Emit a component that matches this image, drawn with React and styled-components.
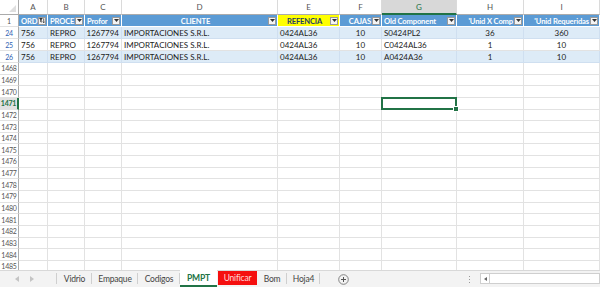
import React from 'react';
import styled, { createGlobalStyle, css } from 'styled-components';

const COLS = '19px 29px 37px 37px 156px 62px 42px 75px 67px 76px';
const GREEN = '#217346';

const Global = createGlobalStyle`
  html, body { margin: 0; padding: 0; background: #fff; overflow: hidden; }
  body { font-family: Lato, "Open Sans", sans-serif; }
`;

const Page = styled.div`
  width: 600px;
  height: 287px;
  display: flex;
  flex-direction: column;
  overflow: hidden;
`;

const Sheet = styled.div`
  height: 270px;
  overflow: hidden;
`;

const Row = styled.div`
  display: grid;
  grid-template-columns: ${COLS};
  height: ${(p) => p.$h}px;
`;

const Corner = styled.div`
  position: relative;
  border-right: 1px solid #ababab;
  border-bottom: 1px solid #ababab;
  &::after {
    content: '';
    position: absolute;
    right: 2px;
    bottom: 2px;
    border-left: 7px solid transparent;
    border-bottom: 7px solid #dfdfdf;
  }
`;

const ColHead = styled.div`
  display: flex;
  align-items: center;
  justify-content: center;
  font-size: 8px;
  color: #555;
  border-right: 1px solid #dadada;
  border-bottom: 1px solid #ababab;
  ${(p) =>
    p.$active &&
    css`
      background: #d8d8d8;
      color: ${GREEN};
      border-bottom: 2px solid ${GREEN};
    `}
`;

const RowHead = styled.div`
  display: flex;
  align-items: center;
  justify-content: center;
  font-size: 7px;
  letter-spacing: -0.2px;
  color: ${(p) => (p.$filtered ? '#2f5fb3' : '#555')};
  border-right: 1px solid #ababab;
  border-bottom: 1px solid #e2e2e2;
  ${(p) =>
    p.$active &&
    css`
      background: #e1e1e1;
      color: ${GREEN};
      font-weight: 700;
      border-right: 2px solid ${GREEN};
    `}
`;

const Cell = styled.div`
  position: relative;
  display: flex;
  align-items: center;
  justify-content: ${(p) => p.$align || 'flex-start'};
  padding: 0 2px;
  font-size: 8px;
  color: #222;
  white-space: nowrap;
  overflow: ${(p) => (p.$selected ? 'visible' : 'hidden')};
  background: ${(p) => (p.$band ? '#ddebf7' : '#fff')};
  border-right: 1px solid ${(p) => (p.$band ? '#cfdff0' : '#e2e2e2')};
  border-bottom: 1px solid ${(p) => (p.$band ? '#cfdff0' : '#e2e2e2')};
  ${(p) =>
    p.$selected &&
    css`
      &::after {
        content: '';
        position: absolute;
        left: -1px;
        top: -1px;
        right: -1px;
        bottom: -1px;
        border: 2px solid ${GREEN};
        z-index: 2;
      }
      &::before {
        content: '';
        position: absolute;
        right: -3px;
        bottom: -3px;
        width: 4px;
        height: 4px;
        background: ${GREEN};
        border: 1px solid #fff;
        z-index: 3;
      }
    `}
`;

const HeadCell = styled.div`
  display: flex;
  align-items: center;
  gap: 1px;
  padding: 0 1px 0 2px;
  overflow: hidden;
  background: ${(p) => (p.$yellow ? '#ffff00' : '#5b9bd5')};
  border-right: 1px solid #fff;
  border-bottom: 1px solid #fff;
`;

const HeadText = styled.span`
  flex: 1;
  min-width: 0;
  white-space: nowrap;
  font-size: 7.6px;
  letter-spacing: -0.15px;
  font-weight: 700;
  text-align: ${(p) => p.$align || 'left'};
  color: ${(p) => (p.$yellow ? '#1f3c66' : '#fff')};
`;

const FilterBtn = styled.span`
  flex: none;
  width: 8px;
  height: 8px;
  display: flex;
  align-items: center;
  justify-content: center;
  background: #f4f4f4;
  border: 1px solid #9a9a9a;
  box-sizing: border-box;
`;

const Arrow = () => (
  <svg width="5" height="3" viewBox="0 0 5 3">
    <path d="M0 0h5L2.5 3z" fill="#333" />
  </svg>
);

const FunnelIcon = () => (
  <svg width="7" height="7" viewBox="0 0 7 7">
    <path d="M0 0.5h4.5L3 2.5v3.5L1.5 5V2.5z" fill="#333" />
    <path d="M5.5 1v5M4.3 4.8l1.2 1.4 1.2-1.4" stroke="#333" strokeWidth="0.9" fill="none" />
  </svg>
);

const TabBar = styled.div`
  height: 17px;
  display: flex;
  align-items: stretch;
  background: #f3f3f3;
  border-top: 1px solid #d8d8d8;
  box-sizing: border-box;
`;

const Nav = styled.div`
  width: 57px;
  display: flex;
  align-items: center;
  gap: 11px;
  padding-left: 15px;
  box-sizing: border-box;
  border-right: 1px solid #cfcfcf;
  margin: 2px 0 3px;
`;

const Tab = styled.div`
  width: ${(p) => p.$w}px;
  flex: none;
  display: flex;
  align-items: center;
  justify-content: center;
  box-sizing: border-box;
  font-size: 8.5px;
  letter-spacing: -0.2px;
  color: #444;
  position: relative;
  ${(p) =>
    !p.$active &&
    !p.$red &&
    css`
      &::after {
        content: '';
        position: absolute;
        right: 0;
        top: 2px;
        bottom: 3px;
        border-right: 1px solid #cfcfcf;
      }
    `}
  ${(p) =>
    p.$active &&
    css`
      background: #fff;
      color: ${GREEN};
      font-weight: 700;
      border-bottom: 2px solid ${GREEN};
      margin-top: -1px;
    `}
  ${(p) =>
    p.$red &&
    css`
      background: #f50f0f;
      color: #ffd9d9;
      margin: 0 0 2px 1px;
    `}
`;

const AddBtn = styled.div`
  display: flex;
  align-items: center;
  margin-left: 18px;
`;

const Splitter = styled.div`
  margin-left: auto;
  width: 3px;
  display: flex;
  flex-direction: column;
  justify-content: center;
  gap: 2px;
  margin-right: 8px;
  span {
    width: 1px;
    height: 1px;
    background: #999;
  }
`;

const Scroll = styled.div`
  width: 120px;
  display: flex;
  align-items: center;
  padding: 2px 0 3px;
  box-sizing: border-box;
`;

const ScrollTrack = styled.div`
  flex: 1;
  height: 100%;
  background: #fff;
  border: 1px solid #cfcfcf;
  box-sizing: border-box;
  display: flex;
  align-items: center;
`;

const ScrollArrow = styled.div`
  width: 8px;
  height: 100%;
  display: flex;
  align-items: center;
  justify-content: center;
  border-right: 1px solid #cfcfcf;
`;

const headers = [
  { t: 'ORD', funnel: true },
  { t: 'PROCE' },
  { t: 'Profor' },
  { t: 'CLIENTE', align: 'center' },
  { t: 'REFENCIA', align: 'center', yellow: true },
  { t: 'CAJAS', align: 'right' },
  { t: 'Old Component' },
  { t: "'Unid X Comp", align: 'right' },
  { t: "'Unid Requeridas", align: 'right' },
];

const data = [
  { n: 24, band: true, v: ['756', 'REPRO', '1267794', 'IMPORTACIONES S.R.L.', '0424AL36', '10', 'S0424PL2', '36', '360'] },
  { n: 25, band: false, v: ['756', 'REPRO', '1267794', 'IMPORTACIONES S.R.L.', '0424AL36', '10', 'C0424AL36', '1', '10'] },
  { n: 26, band: true, v: ['756', 'REPRO', '1267794', 'IMPORTACIONES S.R.L.', '0424AL36', '10', 'A0424A36', '1', '10'] },
];

const tabs = [
  { t: 'Vidrio', w: 35 },
  { t: 'Empaque', w: 46 },
  { t: 'Codigos', w: 42 },
  { t: 'PMPT', w: 37, active: true },
  { t: 'Unificar', w: 39, red: true },
  { t: 'Bom', w: 30 },
  { t: 'Hoja4', w: 33 },
];

const align = [null, null, 'flex-end', null, null, 'center', null, 'center', 'center'];
const letters = ['A', 'B', 'C', 'D', 'E', 'F', 'G', 'H', 'I'];
const empty = Array.from({ length: 18 }, (_, i) => 1468 + i);

const NavArrow = ({ dir }) => (
  <svg width="4" height="6" viewBox="0 0 4 6">
    <path d={dir === 'l' ? 'M4 0v6L0 3z' : 'M0 0v6l4-3z'} fill="#c4c4c4" />
  </svg>
);

export default function App() {
  return (
    <Page>
      <Global />
      <Sheet>
        <Row $h={15}>
          <Corner />
          {letters.map((l) => (
            <ColHead key={l} $active={l === 'G'}>{l}</ColHead>
          ))}
        </Row>
        <Row $h={12}>
          <RowHead>1</RowHead>
          {headers.map((h) => (
            <HeadCell key={h.t} $yellow={h.yellow}>
              <HeadText $align={h.align} $yellow={h.yellow}>{h.t}</HeadText>
              <FilterBtn>{h.funnel ? <FunnelIcon /> : <Arrow />}</FilterBtn>
            </HeadCell>
          ))}
        </Row>
        {data.map((r) => (
          <Row key={r.n} $h={12}>
            <RowHead $filtered>{r.n}</RowHead>
            {r.v.map((v, i) => (
              <Cell key={i} $band={r.band} $align={align[i]}>{v}</Cell>
            ))}
          </Row>
        ))}
        {empty.map((n) => (
          <Row key={n} $h={11.65}>
            <RowHead $active={n === 1471}>{n}</RowHead>
            {letters.map((l) => (
              <Cell key={l} $selected={n === 1471 && l === 'G'} />
            ))}
          </Row>
        ))}
      </Sheet>
      <TabBar>
        <Nav>
          <NavArrow dir="l" />
          <NavArrow dir="r" />
        </Nav>
        {tabs.map((t) => (
          <Tab key={t.t} $w={t.w} $active={t.active} $red={t.red}>{t.t}</Tab>
        ))}
        <AddBtn>
          <svg width="11" height="11" viewBox="0 0 11 11">
            <circle cx="5.5" cy="5.5" r="4.8" fill="none" stroke="#777" strokeWidth="0.9" />
            <path d="M5.5 3v5M3 5.5h5" stroke="#555" strokeWidth="1" />
          </svg>
        </AddBtn>
        <Splitter>
          <span />
          <span />
          <span />
        </Splitter>
        <Scroll>
          <ScrollTrack>
            <ScrollArrow>
              <svg width="3" height="4" viewBox="0 0 3 4">
                <path d="M3 0v4L0 2z" fill="#666" />
              </svg>
            </ScrollArrow>
          </ScrollTrack>
        </Scroll>
      </TabBar>
    </Page>
  );
}
